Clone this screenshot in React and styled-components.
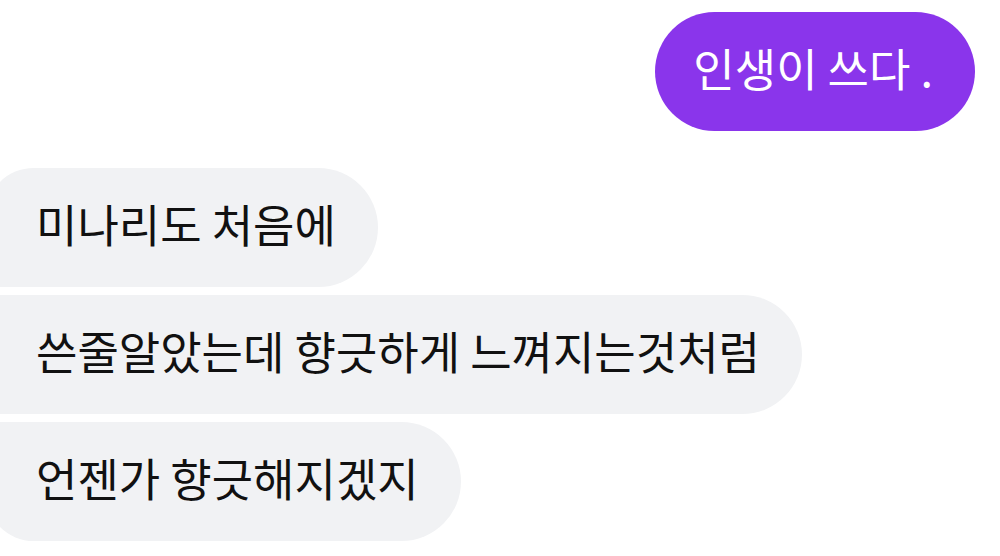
import React from 'react';
import styled, { createGlobalStyle } from 'styled-components';

const GlobalStyle = createGlobalStyle`
  html, body {
    margin: 0;
    padding: 0;
    background: #fff;
    overflow: hidden;
  }
  body {
    font-family: "Noto Sans CJK KR", "Noto Sans", sans-serif;
  }
`;

const ChatContainer = styled.div`
  width: 1000px;
  height: 556px;
  display: flex;
  flex-direction: column;
  padding: 12px 25px 0 0;
  box-sizing: border-box;
  overflow: hidden;
`;

const SentRow = styled.div`
  display: flex;
  justify-content: flex-end;
  margin-bottom: 37px;
`;

const ReceivedGroup = styled.div`
  display: flex;
  flex-direction: column;
  align-items: flex-start;
  gap: 8px;
  margin-left: -14px;
`;

const Bubble = styled.div`
  height: 119px;
  box-sizing: border-box;
  display: flex;
  align-items: center;
  font-size: 45px;
  line-height: 1;
  font-weight: 400;
  white-space: nowrap;
`;

const SentBubble = styled(Bubble)`
  padding: 0 42px 8px 38px;
  background: #8a35eb;
  color: #fff;
  border-radius: 60px;
`;

const ReceivedBubble = styled(Bubble)`
  padding: 0 42px 8px 50px;
  background: #f1f2f4;
  color: #111;
  border-radius: ${({ $first, $last }) =>
    `${$first ? 48 : 14}px 60px 60px ${$last ? 48 : 14}px`};
`;

const messages = [
  '미나리도 처음에',
  '쓴줄알았는데 향긋하게 느껴지는것처럼',
  '언젠가 향긋해지겠지',
];

const App = () => {
  return (
    <>
      <GlobalStyle />
      <ChatContainer>
        <SentRow>
          <SentBubble>인생이 쓰다 .</SentBubble>
        </SentRow>
        <ReceivedGroup>
          {messages.map((text, idx) => (
            <ReceivedBubble
              key={idx}
              $first={idx === 0}
              $last={idx === messages.length - 1}
            >
              {text}
            </ReceivedBubble>
          ))}
        </ReceivedGroup>
      </ChatContainer>
    </>
  );
};

export default App;
